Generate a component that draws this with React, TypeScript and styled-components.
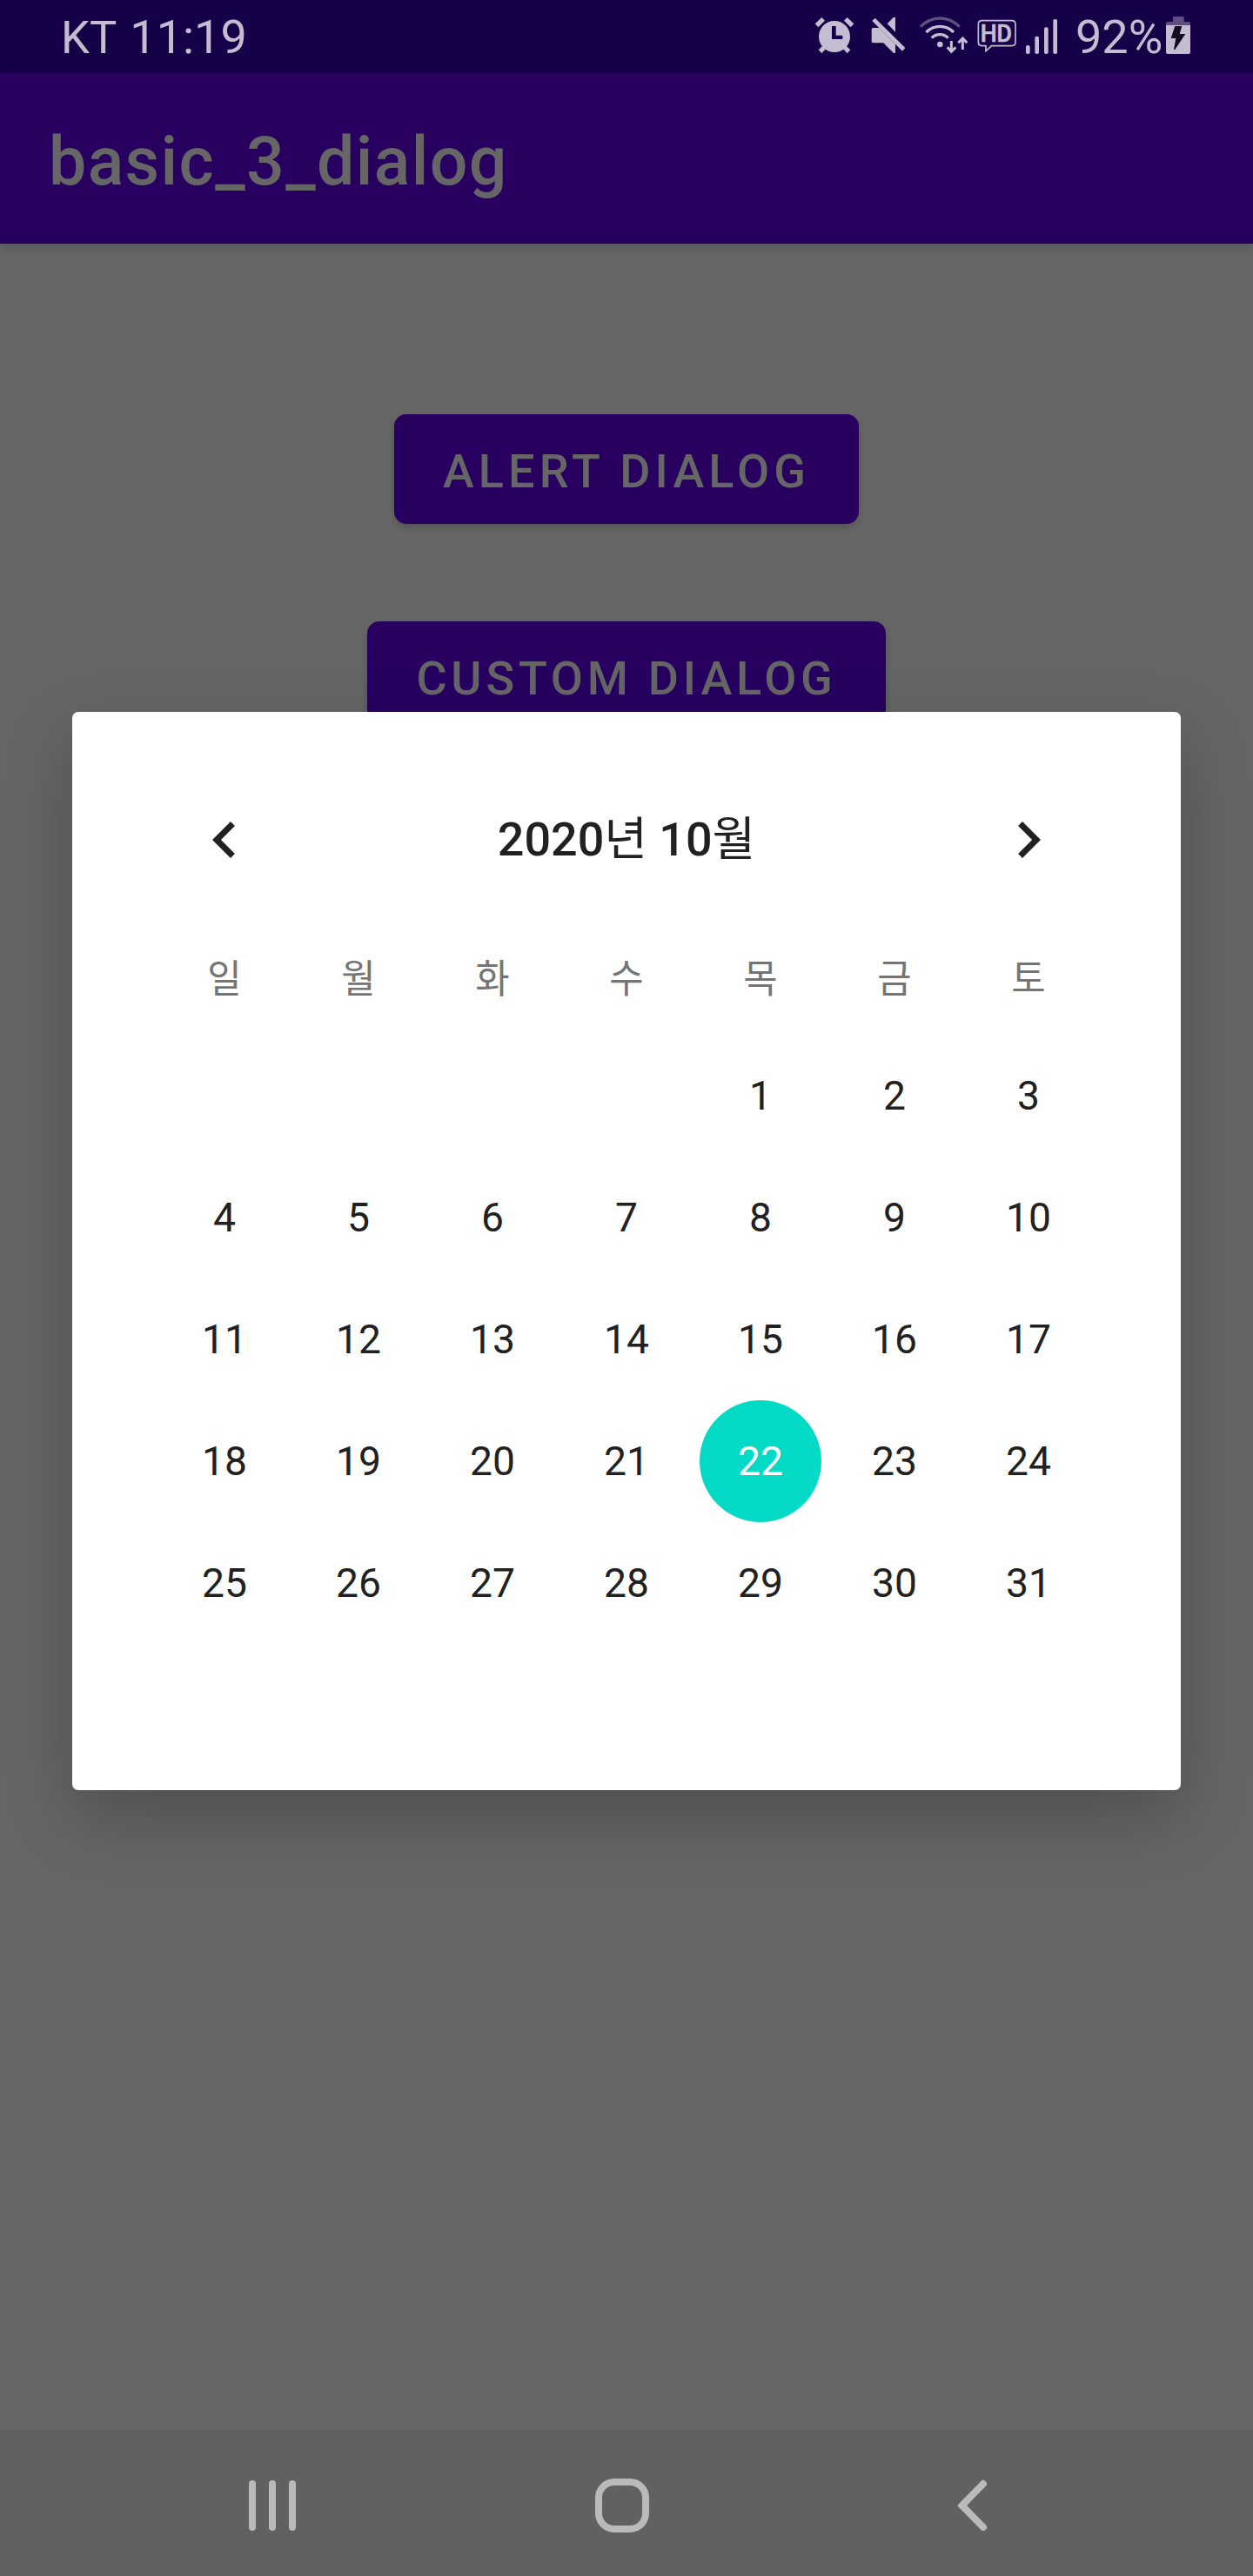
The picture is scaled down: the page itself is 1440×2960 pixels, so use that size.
import React from "react";
import styled, { createGlobalStyle } from "styled-components";

const GlobalStyle = createGlobalStyle`
  html, body { margin: 0; padding: 0; background: #666666; }
  * { box-sizing: border-box; }
  body { font-family: Roboto, "Noto Sans CJK KR", sans-serif; }
  svg { display: block; flex: none; }
`;

const Screen = styled.div`
  display: flex;
  flex-direction: column;
  position: relative;
  width: 1440px;
  height: 2960px;
  overflow: hidden;
  background: #666666;
`;

const StatusBar = styled.header`
  display: flex;
  flex: none;
  justify-content: space-between;
  height: 84px;
  padding: 0 71px 0 70px;
  background: #160048;
  color: #c4bdd1;
  font-size: 54px;
  line-height: 86px;
  white-space: pre;
`;

const Carrier = styled.div`
  display: flex;
  gap: 15px;
`;

const CarrierName = styled.span`
  font-size: 52.5px;
`;

const StatusIcons = styled.div`
  display: flex;
  align-items: flex-start;
`;

const StatusIcon = styled.svg.attrs({ fill: "#c4bdd1", height: 45 })<{ $gap?: number }>`
  margin-top: 18px;
  margin-left: ${(p) => p.$gap ?? 0}px;
`;

const Battery = styled.span`
  width: 106px;
  padding-left: 3px;
  margin-left: 17px;
`;

const AppBar = styled.div`
  display: flex;
  flex: none;
  align-items: center;
  height: 196px;
  padding: 8px 56px 0;
  background: #270060;
  box-shadow: 0 6px 14px rgba(0, 0, 0, 0.12);
`;

const Title = styled.h1`
  margin: 0;
  color: #666666;
  font-size: 77px;
  font-weight: 500;
  letter-spacing: 1.38px;
  line-height: 90px;
`;

const Content = styled.main`
  display: flex;
  flex: 1;
  flex-direction: column;
  align-items: center;
  gap: 112px;
  padding-top: 196px;
`;

const Button = styled.button<{ $tracking?: number }>`
  height: 126px;
  padding: 5px 56px 0;
  border: 0;
  border-radius: 14px;
  background: #270060;
  box-shadow: 0 4px 9px rgba(0, 0, 0, 0.18);
  color: #666666;
  font-family: inherit;
  font-size: 53.9px;
  font-weight: 500;
  letter-spacing: ${(p) => p.$tracking ?? 4.81}px;
  line-height: 64px;
  white-space: nowrap;
`;

const NavBar = styled.nav`
  display: grid;
  flex: none;
  grid-template-columns: 402px 418px 40px;
  align-items: center;
  height: 168px;
  padding: 6px 300px 0 280px;
  background: #616161;
`;

const Dialog = styled.section`
  position: absolute;
  left: 83px;
  top: 818px;
  display: flex;
  flex-direction: column;
  align-items: center;
  width: 1274px;
  height: 1239px;
  border-radius: 7px;
  background: #ffffff;
  box-shadow: 0 30px 82px rgba(0, 0, 0, 0.24);
  color: #212121;
`;

const MonthHeader = styled.div`
  display: flex;
  justify-content: space-between;
  align-items: center;
  width: 1008px;
  height: 84px;
  margin-top: 105px;
`;

const Month = styled.h2`
  margin: 0;
  font-size: 53.9px;
  font-weight: 500;
  line-height: 84px;
  white-space: nowrap;
`;

const HangulSyllable = styled.span`
  font-weight: 400;
`;

const WeekRow = styled.div<{ $top?: number }>`
  display: grid;
  grid-template-columns: repeat(7, 154px);
  justify-items: center;
  margin-top: ${(p) => p.$top ?? 0}px;
`;

const Weekday = styled.span`
  height: 140px;
  color: #757575;
  font-size: 45.5px;
  line-height: 140px;
  transform: scaleX(0.94);
`;

const Day = styled.span<{ $selected?: boolean }>`
  width: 140px;
  height: 140px;
  border-radius: 50%;
  background: ${(p) => (p.$selected ? "#03dac6" : "transparent")};
  color: ${(p) => (p.$selected ? "#ffffff" : "#212121")};
  font-size: 46.2px;
  line-height: 140px;
  text-align: center;
`;

const HdText = styled.text`
  font-family: Roboto, sans-serif;
  font-size: 82px;
  font-weight: 500;
`;

const weekdays = ["일", "월", "화", "수", "목", "금", "토"];
const weeks = [0, 1, 2, 3, 4].map((w) =>
  weekdays.map((_, d) => w * 7 + d - 3)
);

export default function App() {
  return (
    <>
      <GlobalStyle />
      <Screen>
        <StatusBar>
          <Carrier>
            <CarrierName>KT</CarrierName>
            <span>11:19</span>
          </Carrier>
          <StatusIcons>
            <StatusIcon width={46} viewBox="48 54 138 135">
              <path d="M50 82 73 60 84 71 61 94zM150 71 161 60 184 82 173 94z" />
              <path d="M62 172 76 158 87 169 73 184zM158 158 172 172 161 184 147 169z" />
              <path fillRule="evenodd" d="M117 72a54 54 0 1 1 0 108a54 54 0 1 1 0-108zM108 90V135H145V122H122V90z" />
            </StatusIcon>
            <StatusIcon width={40} $gap={19} viewBox="243 54 120 135">
              <path d="M327 60V110L299 82 320 60zM251 96H271L327 152V183H321L286 148H251Q245 148 245 142V102Q245 96 251 96z" />
              <path d="M257 62 361 165 351 176 247 72z" />
            </StatusIcon>
            <StatusIcon width={57} $gap={15} viewBox="408 54 171 135">
              <g fill="none" stroke="#c4bdd1" strokeWidth="10">
                <path opacity=".42" d="M414 92Q443 63 480.500 63Q519 63 548 92" />
                <path d="M433 111Q454 91 480.500 91Q508 91 528 111" />
                <path d="M452 131Q464 119 480.500 119Q497 119 509 131" />
                <path strokeWidth="9" d="M520 141V178M506 163 520 178 535 163M559 171V134M544 148 559 132 574 148" />
              </g>
              <circle cx="481" cy="153" r="10" />
            </StatusIcon>
            <StatusIcon width={45} $gap={10} viewBox="609 54 135 135">
              <path fill="none" stroke="#c4bdd1" strokeWidth="5" d="M626 71H728Q741 71 741 84V145Q741 158 728 158H659L639 176V158H626Q613 158 613 145V84Q613 71 626 71z" />
              <HdText x="620" y="145" stroke="#c4bdd1" strokeWidth="2" textLength="109" lengthAdjust="spacingAndGlyphs">HD</HdText>
            </StatusIcon>
            <StatusIcon width={38} $gap={10} viewBox="54 54 114 135">
              <rect x="57" y="156" width="14" height="30" rx="6" />
              <rect x="88" y="125" width="14" height="61" rx="6" />
              <rect x="120" y="94" width="14" height="92" rx="6" />
              <rect x="151" y="66" width="14" height="120" rx="6" />
            </StatusIcon>
            <Battery>92%</Battery>
            <StatusIcon width={30} viewBox="537 54 90 135">
              <path opacity=".42" d="M564 60Q564 57 567 57H599Q602 57 602 60V75H618Q624 75 624 81V87H540V81Q540 75 546 75H564z" />
              <path d="M540 87H624V180Q624 186 618 186H546Q540 186 540 180z" />
              <path fill="#160c22" d="M571 90H595L587 117H607L571 171H567L574 132H557z" />
            </StatusIcon>
          </StatusIcons>
        </StatusBar>
        <AppBar>
          <Title>basic_3_dialog</Title>
        </AppBar>
        <Content>
          <Button $tracking={5.15}>ALERT DIALOG</Button>
          <Button>CUSTOM DIALOG</Button>
        </Content>
        <NavBar>
          <svg width="66" height="66" fill="#bababa">
            <rect x="6" y="4" width="8" height="58" rx="4" />
            <rect x="29" y="4" width="8" height="58" rx="4" />
            <rect x="52" y="4" width="8" height="58" rx="4" />
          </svg>
          <svg width="66" height="66" fill="none" stroke="#bababa" strokeWidth="8">
            <rect x="6" y="6" width="54" height="54" rx="18" />
          </svg>
          <svg width="40" height="66">
            <path
              fill="none"
              stroke="#bababa"
              strokeWidth="8"
              strokeLinecap="round"
              d="M30 8 5.600 33 30 58"
            />
          </svg>
        </NavBar>
        <Dialog>
          <MonthHeader>
            <svg width="84" height="84" viewBox="0 0 24 24" fill="#212121">
              <path d="M15.410 7.410 14 6 8 12 14 18 15.410 16.590 10.830 12z" />
            </svg>
            <Month>
              2020<HangulSyllable>년</HangulSyllable> 10<HangulSyllable>월</HangulSyllable>
            </Month>
            <svg width="84" height="84" viewBox="0 0 24 24" fill="#212121">
              <path d="M8.590 7.410 10 6 16 12 10 18 8.590 16.590 13.170 12z" />
            </svg>
          </MonthHeader>
          <WeekRow $top={49}>
            {weekdays.map((name) => (
              <Weekday key={name}>{name}</Weekday>
            ))}
          </WeekRow>
          <WeekRow $top={-7}>
            {weeks.flat().map((n) => (
              <Day key={n} $selected={n === 22}>
                {n > 0 ? n : ""}
              </Day>
            ))}
          </WeekRow>
        </Dialog>
      </Screen>
    </>
  );
}
